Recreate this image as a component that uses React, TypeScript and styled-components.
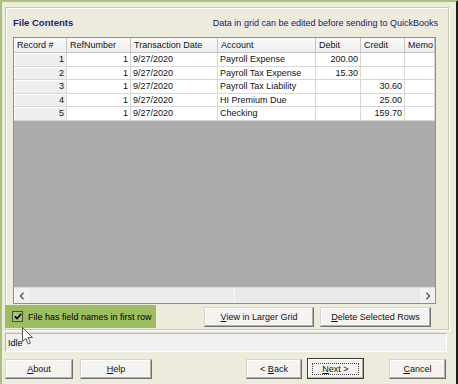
import React from 'react';
import styled, { createGlobalStyle } from 'styled-components';

const Global = createGlobalStyle`
  html, body { margin: 0; padding: 0; }
  body {
    width: 458px; height: 384px; overflow: hidden;
    font-family: "Liberation Sans", Arial, sans-serif;
  }
`;

const Window = styled.div`
  box-sizing: border-box;
  position: relative;
  width: 458px;
  height: 384px;
  background: #ecebdc;
  border-top: 2px solid #a8c27e;
  border-left: 2px solid #a8c27e;
  border-right: 2px solid #1d1d1d;
  padding: 5px 7px 0 3px;
  display: flex;
  flex-direction: column;
  font-size: 9px;
  color: #000;
`;

const GroupBox = styled.div`
  box-sizing: border-box;
  height: 323px;
  border: 1px solid #c9c6b6;
  box-shadow: inset 1px 1px 0 #ffffff, 1px 1px 0 #ffffff;
  padding: 6px 12px 1px 7px;
  display: flex;
  flex-direction: column;
`;

const HeaderRow = styled.div`
  height: 17px;
  margin-bottom: 6px;
  display: flex;
  align-items: center;
  justify-content: space-between;
`;

const Title = styled.span`
  font-weight: bold;
  font-size: 9.5px;
  color: #1f1c7e;
`;

const Hint = styled.span`
  color: #1a1878;
  font-size: 9px;
  margin-right: -2px;
`;

const Grid = styled.div`
  box-sizing: border-box;
  height: 267px;
  border: 1px solid #8e8e8e;
  display: flex;
  flex-direction: column;
  background: #ababab;
`;

const cols = '53px 64px 87px 98px 45px 44px 1fr';

const GridRow = styled.div<{ $head?: boolean }>`
  display: grid;
  grid-template-columns: ${cols};
  height: ${p => (p.$head ? '15px' : '13.5px')};
  background: #ffffff;
  flex: none;
`;

const Cell = styled.div<{ $align?: 'left' | 'right'; $kind?: 'head' | 'rowhead' | 'data' }>`
  box-sizing: border-box;
  overflow: hidden;
  white-space: nowrap;
  display: flex;
  align-items: center;
  justify-content: ${p => (p.$align === 'right' ? 'flex-end' : 'flex-start')};
  padding: ${p => (p.$kind === 'head' ? '0 0 0 3px' : p.$align === 'right' ? '0 2px 0 0' : '0 0 0 2px')};
  border-right: 1px solid ${p => (p.$kind === 'head' ? '#c4c4c4' : '#d8d8d8')};
  border-bottom: 1px solid ${p => (p.$kind === 'head' ? '#c4c4c4' : '#d8d8d8')};
  background: ${p =>
    p.$kind === 'head'
      ? 'linear-gradient(#fbfbfb, #eeeeee)'
      : p.$kind === 'rowhead'
      ? '#efefef'
      : '#ffffff'};
  box-shadow: ${p => (p.$kind === 'rowhead' ? 'inset 1px 1px 0 #ffffff' : 'none')};
  font-size: 9px;
  color: #111;
`;

const GreyArea = styled.div`
  flex: 1;
  background: #ababab;
`;

const HScroll = styled.div`
  height: 15px;
  flex: none;
  display: flex;
  background: #e9e9e9;
  border-top: 1px solid #dcdcdc;
`;

const ScrollBtn = styled.div`
  width: 15px;
  display: flex;
  align-items: center;
  justify-content: center;
  background: #f2f2f2;
`;

const Thumb = styled.div`
  width: 205px;
  background: #ececec;
  border-right: 1px solid #f8f8f8;
`;

const Track = styled.div`
  flex: 1;
`;

const BottomRow = styled.div`
  height: 23px;
  margin-top: 1px;
  margin-left: -8px;
  display: flex;
  align-items: center;
`;

const CheckArea = styled.label`
  box-sizing: border-box;
  width: 151px;
  height: 23px;
  background: #9dbd62;
  display: flex;
  align-items: center;
  padding-left: 7px;
  gap: 5px;
  font-size: 9px;
  white-space: nowrap;
`;

const CheckBox = styled.span`
  box-sizing: border-box;
  width: 11px;
  height: 11px;
  border: 1px solid #4a4f43;
  background: #a9c27e;
  display: flex;
  align-items: center;
  justify-content: center;
  flex: none;
`;

const GridButtons = styled.div`
  margin-left: auto;
  margin-right: 5px;
  display: flex;
  gap: 6px;
`;

const Button = styled.button<{ $w: number; $default?: boolean }>`
  box-sizing: border-box;
  width: ${p => p.$w}px;
  height: ${p => (p.$default ? '21px' : '20px')};
  padding: 0;
  margin: 0;
  font-family: "Liberation Sans", Arial, sans-serif;
  font-size: 9px;
  color: #111;
  background: #f4f3ef;
  border: 1px solid;
  border-color: #d6d6d0 #6f6f6f #6f6f6f #d6d6d0;
  box-shadow: inset -1px -1px 0 #b3b1a6, inset 1px 1px 0 #ffffff;
  display: flex;
  align-items: center;
  justify-content: center;
  white-space: nowrap;
  u { text-decoration: underline; }
  ${p =>
    p.$default &&
    `
    border-color: #3c3c3c;
  `}
`;

const FocusRect = styled.span`
  box-sizing: border-box;
  width: calc(100% - 8px);
  height: calc(100% - 7px);
  border: 1px dotted #444;
  display: flex;
  align-items: center;
  justify-content: center;
`;

const StatusBar = styled.div`
  box-sizing: border-box;
  height: 19px;
  margin-top: 3px;
  margin-right: 2px;
  background: #f1f1f0;
  border: 1px solid;
  border-color: #b9b8ad #ffffff #ffffff #b9b8ad;
  display: flex;
  align-items: center;
  padding-left: 2px;
  font-size: 9px;
`;

const ActionRow = styled.div`
  height: 21px;
  margin-top: 6px;
  display: flex;
  align-items: center;
`;

const Spacer = styled.div<{ $w?: number }>`
  width: ${p => (p.$w ? `${p.$w}px` : 'auto')};
  flex: ${p => (p.$w ? 'none' : '1')};
`;

const Cursor = styled.svg`
  position: absolute;
  left: 20px;
  top: 325px;
  pointer-events: none;
`;

const Chevron = ({ dir }: { dir: 'left' | 'right' }) => (
  <svg width="6" height="8" viewBox="0 0 6 8">
    <path
      d={dir === 'left' ? 'M4.5 0.8 L1.5 4 L4.5 7.2' : 'M1.5 0.8 L4.5 4 L1.5 7.2'}
      fill="none"
      stroke="#555"
      strokeWidth="1.4"
    />
  </svg>
);

type Row = { n: string; ref: string; date: string; acct: string; debit: string; credit: string };
const rows: Row[] = [
  { n: '1', ref: '1', date: '9/27/2020', acct: 'Payroll Expense', debit: '200.00', credit: '' },
  { n: '2', ref: '1', date: '9/27/2020', acct: 'Payroll Tax Expense', debit: '15.30', credit: '' },
  { n: '3', ref: '1', date: '9/27/2020', acct: 'Payroll Tax Liability', debit: '', credit: '30.60' },
  { n: '4', ref: '1', date: '9/27/2020', acct: 'HI Premium Due', debit: '', credit: '25.00' },
  { n: '5', ref: '1', date: '9/27/2020', acct: 'Checking', debit: '', credit: '159.70' },
];

const headers = ['Record #', 'RefNumber', 'Transaction Date', 'Account', 'Debit', 'Credit', 'Memo'];

export default function App() {
  return (
    <>
      <Global />
      <Window>
        <GroupBox>
          <HeaderRow>
            <Title>File Contents</Title>
            <Hint>Data in grid can be edited before sending to QuickBooks</Hint>
          </HeaderRow>
          <Grid>
            <GridRow $head>
              {headers.map(h => (
                <Cell key={h} $kind="head">
                  {h}
                </Cell>
              ))}
            </GridRow>
            {rows.map(r => (
              <GridRow key={r.n}>
                <Cell $kind="rowhead" $align="right">{r.n}</Cell>
                <Cell $kind="data" $align="right">{r.ref}</Cell>
                <Cell $kind="data">{r.date}</Cell>
                <Cell $kind="data">{r.acct}</Cell>
                <Cell $kind="data" $align="right">{r.debit}</Cell>
                <Cell $kind="data" $align="right">{r.credit}</Cell>
                <Cell $kind="data"></Cell>
              </GridRow>
            ))}
            <GreyArea />
            <HScroll>
              <ScrollBtn><Chevron dir="left" /></ScrollBtn>
              <Thumb />
              <Track />
              <ScrollBtn><Chevron dir="right" /></ScrollBtn>
            </HScroll>
          </Grid>
          <BottomRow>
            <CheckArea>
              <CheckBox>
                <svg width="8" height="7" viewBox="0 0 8 7">
                  <path d="M0.8 3.4 L3 5.6 L7.2 0.9" fill="none" stroke="#000" strokeWidth="1.6" />
                </svg>
              </CheckBox>
              File has field names in first row
            </CheckArea>
            <GridButtons>
              <Button $w={110}><span><u>V</u>iew in Larger Grid</span></Button>
              <Button $w={111}><span><u>D</u>elete Selected Rows</span></Button>
            </GridButtons>
          </BottomRow>
        </GroupBox>
        <StatusBar>Idle</StatusBar>
        <ActionRow>
          <Button $w={68}><span><u>A</u>bout</span></Button>
          <Spacer $w={7} />
          <Button $w={72}><span><u>H</u>elp</span></Button>
          <Spacer />
          <Button $w={56}><span>&lt; <u>B</u>ack</span></Button>
          <Spacer $w={5} />
          <Button $w={57} $default>
            <FocusRect><span><u>N</u>ext &gt;</span></FocusRect>
          </Button>
          <Spacer $w={25} />
          <Button $w={57}><span><u>C</u>ancel</span></Button>
          <Spacer $w={3} />
        </ActionRow>
        <Cursor width="12" height="19" viewBox="0 0 12 19">
          <path
            d="M0.5 0.5 L0.5 14.5 L3.8 11.4 L6.2 17 L8.4 16 L6 10.6 L10.5 10.6 Z"
            fill="#ffffff"
            stroke="#555"
            strokeWidth="1"
          />
        </Cursor>
      </Window>
    </>
  );
}
